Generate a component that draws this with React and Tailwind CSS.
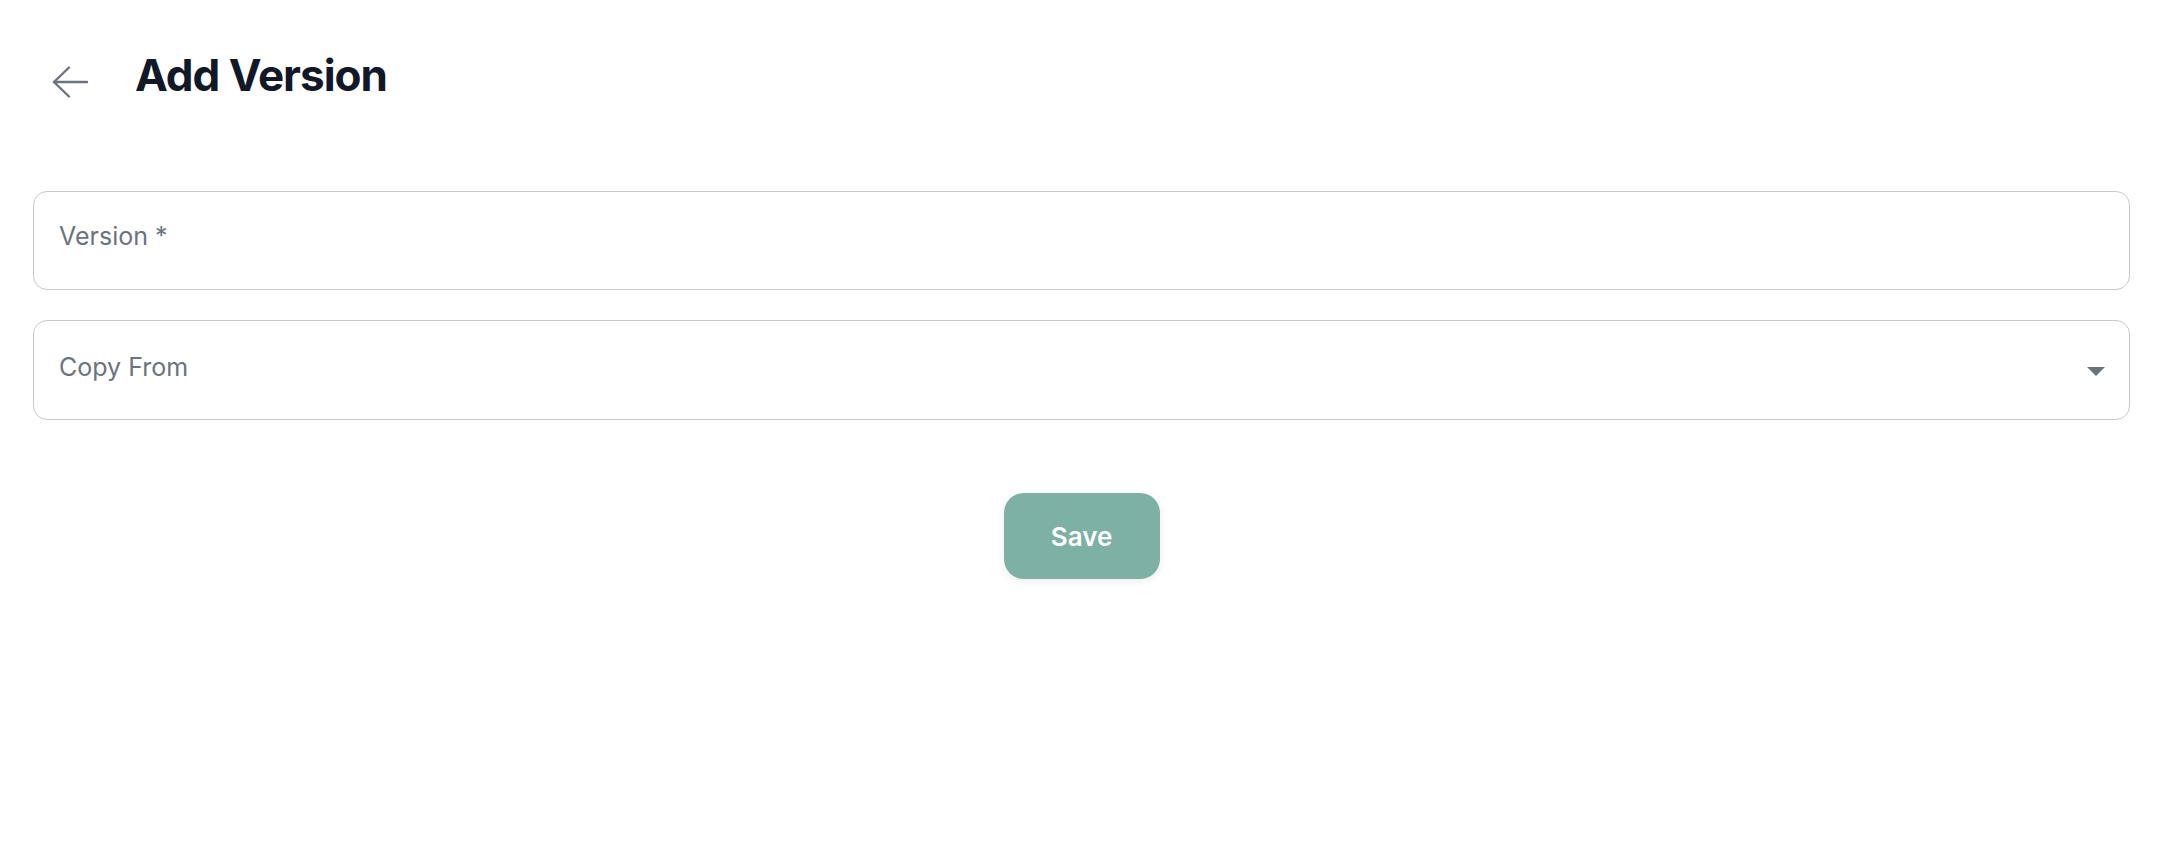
export default function App() {
  return (
    <div className="min-h-screen bg-white pl-[33px] pr-[36px] font-['Inter',sans-serif]">
      {/* Header */}
      <div className="flex items-start pt-[53px]">
        <button className="ml-[19px] mt-[13px] text-[#6b7280]">
          <svg width="37" height="32" viewBox="0 0 37 32" fill="none" stroke="currentColor" strokeWidth="2.4" strokeLinecap="round" strokeLinejoin="round">
            <path d="M2 16H35" />
            <path d="M17 1.5L2 16l15 14.5" />
          </svg>
        </button>
        <h1 className="ml-[46px] text-[44px] leading-none font-bold tracking-[-1px] text-[#111827]">Add Version</h1>
      </div>

      {/* Form */}
      <div className="mt-[93px] flex flex-col gap-[30px]">
        <div className="flex h-[99px] items-center rounded-[14px] border border-[#c9c9c9] pl-[25px] pr-[24px]">
          <span className="mb-[8px] text-[25px] leading-none text-[#6b7280]">Version *</span>
        </div>
        <div className="flex h-[100px] items-center justify-between rounded-[14px] border border-[#c9c9c9] pl-[25px] pr-[24px]">
          <span className="mb-[6px] text-[25px] leading-none text-[#6b7280]">Copy From</span>
          <svg width="18" height="9" viewBox="0 0 18 9" className="mt-[2px]">
            <polygon points="0,0 18,0 9,9" fill="#6b7280" />
          </svg>
        </div>
      </div>

      <div className="mt-[73px] flex justify-center">
        <button className="h-[86px] w-[156px] rounded-[20px] bg-[#7db1a5] text-[26px] font-semibold text-white shadow-[0_2px_8px_rgba(0,0,0,0.08)]">
          Save
        </button>
      </div>
    </div>
  )
}
